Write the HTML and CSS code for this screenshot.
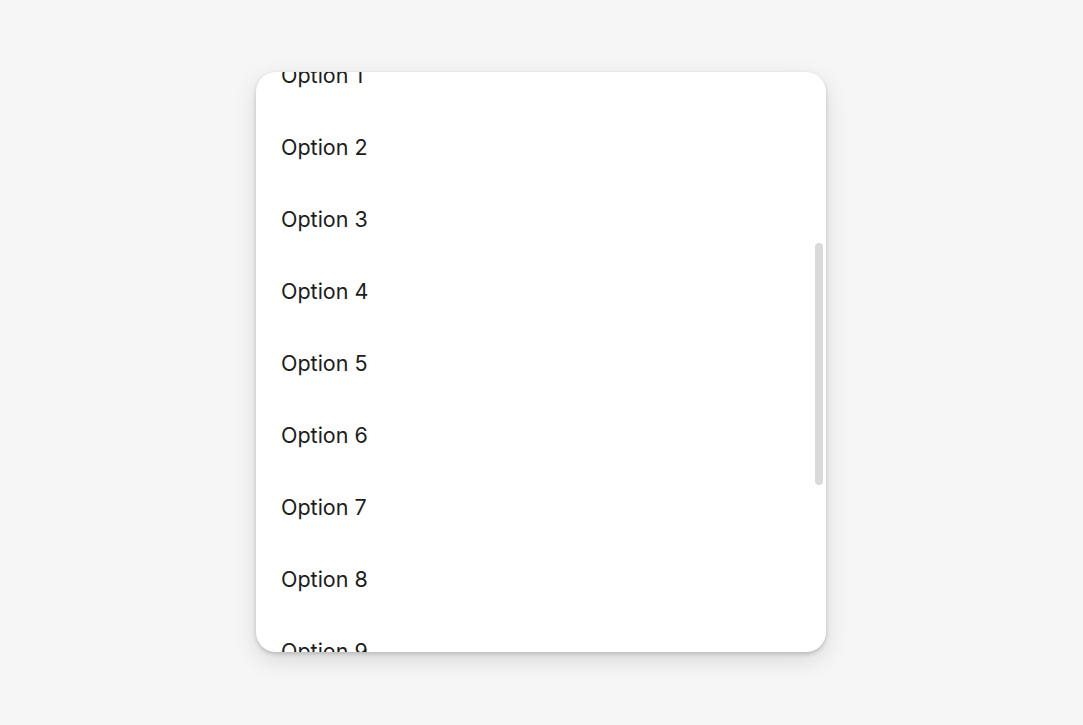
FILE: index.html
```html
<!DOCTYPE html>
<html>
    <head>
        <meta charset="utf-8">
        <title>Options</title>
        <link rel="stylesheet" href="styles.css">
    </head>
    <body>
        <div class="menu">
            <ul class="list">
                <li class="item">Option 1</li>
                <li class="item">Option 2</li>
                <li class="item">Option 3</li>
                <li class="item">Option 4</li>
                <li class="item">Option 5</li>
                <li class="item">Option 6</li>
                <li class="item">Option 7</li>
                <li class="item">Option 8</li>
                <li class="item">Option 9</li>
                <li class="item">Option 10</li>
            </ul>
            <div class="thumb"></div>
        </div>
    </body>
</html>
```

FILE: styles.css
```css
body {
    margin: 0;
    padding-top: 72px;
    min-height: 100vh;
    box-sizing: border-box;
    background-color: #f6f6f6;
    font-family: Inter, "Liberation Sans", sans-serif;
    color: #1c1c1c;
}

.menu {
    position: relative;
    margin-left: 256px;
    width: 570px;
    height: 580px;
    overflow: hidden;
    background-color: #fff;
    border-radius: 20px;
    box-shadow: 0 2px 4px rgba(0, 0, 0, 0.18), 0 8px 24px rgba(0, 0, 0, 0.12);
}

.list {
    list-style: none;
    margin: -33px 0 0;
    padding: 0;
}

.item {
    height: 72px;
    display: flex;
    align-items: center;
    padding-left: 25px;
    font-size: 21.5px;
}

.thumb {
    position: absolute;
    top: 171px;
    right: 3px;
    width: 8px;
    height: 242px;
    border-radius: 4px;
    background-color: #dadada;
}
```
